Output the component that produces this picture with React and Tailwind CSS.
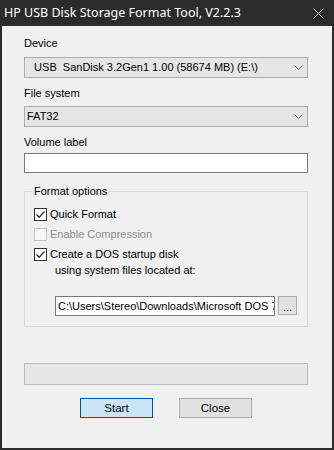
import React from 'react';

const font = { fontFamily: '"Liberation Sans", Arial, sans-serif' };

const Chevron = () => (
  <svg width="9" height="5" viewBox="0 0 9 5" className="shrink-0">
    <path d="M0.5 0.5 L4.5 4.5 L8.5 0.5" fill="none" stroke="#606060" strokeWidth="1" />
  </svg>
);

const Combo = ({ value, className = '' }) => (
  <div className={`h-[21px] flex items-center justify-between bg-[#e5e5e5] border border-[#acacac] pr-[4px] ${className}`}>
    <span className="whitespace-pre">{value}</span>
    <Chevron />
  </div>
);

// Win32-style check box, disabled variant greys out
const CheckBox = ({ checked, disabled, label }) => (
  <div className="h-[20px] flex items-center pl-[9px]">
    <div
      className={`w-[13px] h-[13px] border flex items-center justify-center ${
        disabled ? 'border-[#c4c4c4] bg-[#f7f7f7]' : 'border-[#333333] bg-white'
      }`}
    >
      {checked && (
        <svg width="11" height="11" viewBox="0 0 11 11">
          <path d="M1.5 5.5 L4.2 8.2 L9.5 2.5" fill="none" stroke="#333333" strokeWidth="1.3" />
        </svg>
      )}
    </div>
    <span className={`ml-[3px] ${disabled ? 'text-[#8d8d8d]' : 'text-black'}`}>{label}</span>
  </div>
);

export default function App() {
  return (
    <div className="w-[334px] h-[450px] bg-[#2b2b2b] flex flex-col overflow-hidden" style={font}>
      {/* Title bar */}
      <div className="h-[26px] flex items-center justify-between pl-[4px] pr-[10px] shrink-0">
        <span className="text-white text-[12.5px] leading-[26px]" style={{ fontFamily: '"Noto Sans", "Open Sans", sans-serif' }}>
          HP USB Disk Storage Format Tool, V2.2.3
        </span>
        <svg width="11" height="11" viewBox="0 0 11 11">
          <path d="M0.5 0.5 L10.5 10.5 M10.5 0.5 L0.5 10.5" stroke="#d0d0d0" strokeWidth="1" />
        </svg>
      </div>

      {/* Dialog body */}
      <div className="flex-1 mx-[2px] mb-[2px] bg-[#f0f0f0] pl-[22px] pr-[24px] flex flex-col text-[11px] leading-[13px] text-black">
        <div className="mt-[11px] h-[13px]">Device</div>
        <Combo value="  USB  SanDisk 3.2Gen1 1.00 (58674 MB) (E:\)" className="mt-[7px] pl-[3px]" />

        <div className="mt-[9px] h-[13px]">File system</div>
        <Combo value="FAT32" className="mt-[6px] pl-[2px]" />

        <div className="mt-[9px] h-[13px]">Volume label</div>
        <div className="mt-[4px] h-[20px] bg-white border border-[#7a7a7a]" />

        <fieldset className="mt-[12px] border border-[#d9d9d9] pb-[10px]">
          <legend className="ml-[7px] px-[2px] h-[13px]">Format options</legend>
          <div className="mt-[6px] flex flex-col">
            <CheckBox checked label="Quick Format" />
            <CheckBox disabled label="Enable Compression" />
            <CheckBox checked label="Create a DOS startup disk" />
            <div className="h-[13px] ml-[30px]">using system files located at:</div>
          </div>
          <div className="mt-[19px] ml-[30px] flex items-start gap-[3px]">
            <div className="w-[220px] h-[20px] bg-white border border-[#7a7a7a] pl-[2px] flex items-center overflow-hidden">
              <span className="whitespace-nowrap overflow-hidden">C:\Users\Stereo\Downloads\Microsoft DOS 7</span>
            </div>
            <div className="w-[19px] h-[19px] bg-[#e1e1e1] border border-[#adadad] flex items-end justify-center pb-[2px] leading-[10px]">
              ...
            </div>
          </div>
        </fieldset>

        {/* Progress bar */}
        <div className="mt-[36px] h-[22px] bg-[#e6e6e6] border border-[#bcbcbc]" />

        <div className="mt-[13px] ml-[56px] flex gap-[26px]">
          <div className="w-[73px] h-[20px] bg-[#cce4f7] border border-[#005499] flex items-center justify-center text-[11.5px]">
            Start
          </div>
          <div className="w-[73px] h-[20px] bg-[#e1e1e1] border border-[#adadad] flex items-center justify-center text-[11.5px]">
            Close
          </div>
        </div>
      </div>
    </div>
  );
}
